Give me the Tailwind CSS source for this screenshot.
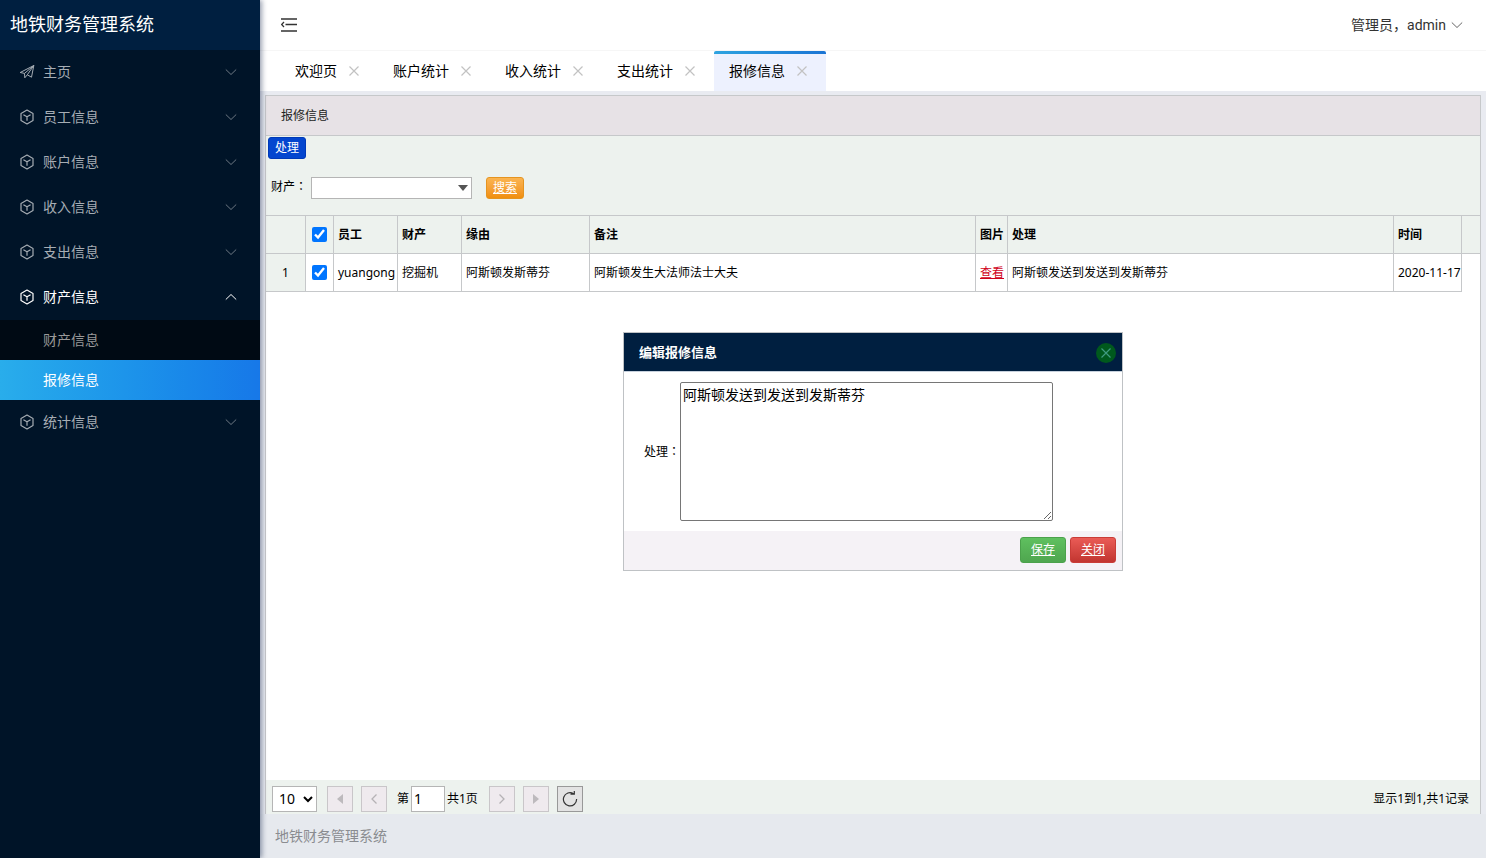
<!DOCTYPE html>
<html lang="zh-CN">
<head>
<meta charset="utf-8">
<title>地铁财务管理系统</title>
<script src="https://cdn.jsdelivr.net/npm/@tailwindcss/browser@4"></script>
</head>
<body class="flex h-screen overflow-hidden bg-[#e9ebf1] font-['Noto_Sans','Noto_Sans_CJK_SC',sans-serif] text-xs text-black">
<svg class="hidden">
  <symbol id="cube" viewBox="0 0 16 16" fill="none" stroke="currentColor" stroke-width="1.200" stroke-linejoin="round"><path d="M8 1 14 4.400v7.200L8 15 2 11.600V4.400zM4.400 5.800 8 7.800l3.600-2M8 7.800v4"/></symbol>
  <symbol id="down" viewBox="0 0 12 12" fill="none" stroke="currentColor"><path d="M.8 3.500 6 8.500l5.200-5"/></symbol>
  <symbol id="cross" viewBox="0 0 10 10" fill="none" stroke="currentColor" stroke-width="1.200"><path d="M.5.5l9 9M9.500.5l-9 9"/></symbol>
</svg>

<aside class="relative z-10 flex w-[260px] shrink-0 flex-col bg-[#001428] shadow-[2px_0_5px_rgba(0,21,60,0.4)]">
  <h1 class="flex h-[50px] items-center bg-[#001f40] px-[10px] pb-[2px] text-lg text-white">地铁财务管理系统</h1>
  <nav class="text-sm text-[#a6adb4]">
    <a href="#" class="flex h-[45px] items-center gap-2 pr-[23px] pb-[2px] pl-[19px]"><svg class="size-4" viewBox="0 0 16 16" fill="none" stroke="currentColor" stroke-linejoin="round"><path d="M1.200 8.500 14.800 1.500l-2.300 11.700-4.200-2.400-2.500 3-.3-4.400zM5.500 9.400l9.300-7.900-6.500 9.300"/></svg><span class="flex-1">主页</span><svg class="size-3 text-[#6d7883]"><use href="#down"/></svg></a>
    <a href="#" class="flex h-[45px] items-center gap-2 pr-[23px] pb-[2px] pl-[19px]"><svg class="size-4"><use href="#cube"/></svg><span class="flex-1">员工信息</span><svg class="size-3 text-[#6d7883]"><use href="#down"/></svg></a>
    <a href="#" class="flex h-[45px] items-center gap-2 pr-[23px] pb-[2px] pl-[19px]"><svg class="size-4"><use href="#cube"/></svg><span class="flex-1">账户信息</span><svg class="size-3 text-[#6d7883]"><use href="#down"/></svg></a>
    <a href="#" class="flex h-[45px] items-center gap-2 pr-[23px] pb-[2px] pl-[19px]"><svg class="size-4"><use href="#cube"/></svg><span class="flex-1">收入信息</span><svg class="size-3 text-[#6d7883]"><use href="#down"/></svg></a>
    <a href="#" class="flex h-[45px] items-center gap-2 pr-[23px] pb-[2px] pl-[19px]"><svg class="size-4"><use href="#cube"/></svg><span class="flex-1">支出信息</span><svg class="size-3 text-[#6d7883]"><use href="#down"/></svg></a>
    <a href="#" class="flex h-[45px] items-center gap-2 pr-[23px] pb-[2px] pl-[19px] text-white"><svg class="size-4"><use href="#cube"/></svg><span class="flex-1">财产信息</span><svg class="size-3 rotate-180"><use href="#down"/></svg></a>
    <a href="#" class="flex h-10 items-center bg-[#000a14] pl-[43px] text-[#999]">财产信息</a>
    <a href="#" class="flex h-10 items-center bg-linear-to-r from-[#29adeb] to-[#1778e8] pl-[43px] text-white">报修信息</a>
    <a href="#" class="flex h-[45px] items-center gap-2 pr-[23px] pb-[2px] pl-[19px]"><svg class="size-4"><use href="#cube"/></svg><span class="flex-1">统计信息</span><svg class="size-3 text-[#6d7883]"><use href="#down"/></svg></a>
  </nav>
</aside>

<main class="relative flex min-w-0 flex-1 flex-col">
  <header class="flex h-[51px] shrink-0 items-center justify-between border-b border-[#f6f6f6] bg-white pr-[23px] pl-[21px] text-sm text-[#333]">
    <button type="button" aria-label="收起菜单"><svg class="size-4" viewBox="0 0 16 16" fill="none" stroke="#333" stroke-width="1.300"><path d="M0 2h16M4.500 7.500H16M0 14h16M3 5 .6 7.500 3 10"/></svg></button>
    <button type="button" class="flex items-center gap-[5px] font-['Roboto','Noto_Sans_CJK_SC',sans-serif]"><span>管理员，admin</span><svg class="size-3 text-[#666]"><use href="#down"/></svg></button>
  </header>

  <div class="flex h-10 shrink-0 bg-white pl-5 text-sm">
    <div class="flex items-center gap-3 border-t-3 border-transparent pr-[19px] pb-[3px] pl-[15px]"><a href="#">欢迎页</a><button type="button" aria-label="关闭标签" class="text-[#c2c2c2]"><svg class="size-[10px]"><use href="#cross"/></svg></button></div>
    <div class="flex items-center gap-3 border-t-3 border-transparent pr-[19px] pb-[3px] pl-[15px]"><a href="#">账户统计</a><button type="button" aria-label="关闭标签" class="text-[#c2c2c2]"><svg class="size-[10px]"><use href="#cross"/></svg></button></div>
    <div class="flex items-center gap-3 border-t-3 border-transparent pr-[19px] pb-[3px] pl-[15px]"><a href="#">收入统计</a><button type="button" aria-label="关闭标签" class="text-[#c2c2c2]"><svg class="size-[10px]"><use href="#cross"/></svg></button></div>
    <div class="flex items-center gap-3 border-t-3 border-transparent pr-[19px] pb-[3px] pl-[15px]"><a href="#">支出统计</a><button type="button" aria-label="关闭标签" class="text-[#c2c2c2]"><svg class="size-[10px]"><use href="#cross"/></svg></button></div>
    <div class="flex flex-col rounded-t-xs bg-[#edf1fe]"><div class="h-[3px] rounded-t-xs bg-linear-to-r from-[#2ea3e0] to-[#1b74d4]"></div><div class="flex flex-1 items-center gap-3 pr-[19px] pb-[3px] pl-[15px]"><a href="#">报修信息</a><button type="button" aria-label="关闭标签" class="text-[#c2c2c2]"><svg class="size-[10px]"><use href="#cross"/></svg></button></div></div>
  </div>

  <section class="mx-[5px] mt-1 flex min-h-0 flex-1 flex-col border border-b-0 border-[#c6c8ca] bg-white">
    <h2 class="flex h-10 shrink-0 items-center border-b border-[#c6c8ca] bg-[#e7e2e6] px-[15px] text-[#222]">报修信息</h2>
    <div class="flex shrink-0 flex-col bg-[#edf2ee]">
      <div class="flex px-[2px] pt-px"><button type="button" class="h-[22px] w-[38px] rounded-[3px] border border-[#0039b8] bg-[#0446cf] text-white">处理</button></div>
      <form class="flex h-14 items-center px-[5px] pt-px">
        <label for="asset" class="w-10 pb-[2px] whitespace-nowrap">财产<span lang="zh-TW" class="font-['Noto_Sans_CJK_TC',sans-serif]">：</span></label>
        <div class="relative">
          <select id="asset" class="block h-[22px] w-[161px] appearance-none border border-[#b5b5b5] bg-white"><option></option></select>
          <svg class="pointer-events-none absolute top-2 right-1 h-[6px] w-[10px]" viewBox="0 0 10 6" fill="#555"><path d="M0 0h10L5 6z"/></svg>
        </div>
        <button type="button" class="ml-[14px] h-[22px] w-[38px] rounded-[3px] border border-[#e59420] bg-linear-to-b from-[#fbb450] to-[#f08f0a] text-white underline">搜索</button>
      </form>
    </div>
    <table class="w-full table-fixed border-separate border-spacing-0 border-t border-[#c6c8ca] text-left">
      <colgroup><col class="w-10"><col class="w-7"><col class="w-16"><col class="w-16"><col class="w-32"><col><col class="w-8"><col><col class="w-[68px]"><col class="w-[18px]"></colgroup>
      <thead>
        <tr class="h-[38px] bg-[#edf2ee] *:overflow-hidden *:border-r *:border-b *:border-[#c6c8ca] *:px-1 *:py-0 *:font-bold *:whitespace-nowrap">
          <td></td><td><input type="checkbox" checked aria-label="全选" class="mx-[2px] block size-[15px]"></td><th>员工</th><th>财产</th><th>缘由</th><th>备注</th><th>图片</th><th>处理</th><th>时间</th><td class="border-r-0!"></td>
        </tr>
      </thead>
      <tbody>
        <tr class="h-[38px] *:overflow-hidden *:border-r *:border-b *:border-[#c6c8ca] *:px-1 *:py-0 *:whitespace-nowrap">
          <td class="bg-[#edf2ee] text-center">1</td><td><input type="checkbox" checked aria-label="选择第1行" class="mx-[2px] block size-[15px]"></td><td>yuangong</td><td>挖掘机</td><td>阿斯顿发斯蒂芬</td><td>阿斯顿发生大法师法士大夫</td><td><a href="#" class="text-[#d0021b] underline">查看</a></td><td>阿斯顿发送到发送到发斯蒂芬</td><td>2020-11-17</td><td class="border-0!"></td>
        </tr>
      </tbody>
    </table>
    <div class="flex-1"></div>
    <div class="flex h-[34px] shrink-0 items-center bg-[#edf2ee] px-[6px] pt-[3px]">
      <div class="relative">
        <select aria-label="每页条数" class="block h-[26px] w-[45px] appearance-none border border-[#b5b5b5] bg-white pl-[6px] text-sm"><option>10</option></select>
        <svg class="pointer-events-none absolute top-[10px] right-1 h-[7px] w-[10px]" viewBox="0 0 10 7" fill="none" stroke="#000" stroke-width="2"><path d="M1 1l4 4 4-4"/></svg>
      </div>
      <button type="button" disabled aria-label="首页" class="ml-[10px] grid size-[26px] place-items-center border border-[#c9c6c9] bg-[#efeaee]"><svg class="h-[10px] w-[6px]" viewBox="0 0 6 10" fill="#bdbabd"><path d="M6 0v10L0 5z"/></svg></button>
      <button type="button" disabled aria-label="上一页" class="ml-2 grid size-[26px] place-items-center border border-[#c9c6c9] bg-[#efeaee]"><svg class="h-[10px] w-[6px]" viewBox="0 0 6 10" fill="none" stroke="#b5b2b5" stroke-width="1.300"><path d="M5.500.5 1 5l4.500 4.500"/></svg></button>
      <label for="page" class="ml-[10px] w-[14px]">第</label>
      <input id="page" type="text" value="1" class="h-[26px] w-[34px] border border-[#b5b5b5] bg-white px-[2px] text-sm">
      <span class="ml-[2px] w-8 whitespace-nowrap">共1页</span>
      <button type="button" disabled aria-label="下一页" class="ml-[10px] grid size-[26px] place-items-center border border-[#c9c6c9] bg-[#efeaee]"><svg class="h-[10px] w-[6px]" viewBox="0 0 6 10" fill="none" stroke="#b5b2b5" stroke-width="1.300"><path d="M.5.5 5 5 .5 9.500"/></svg></button>
      <button type="button" disabled aria-label="末页" class="ml-2 grid size-[26px] place-items-center border border-[#c9c6c9] bg-[#efeaee]"><svg class="h-[10px] w-[6px]" viewBox="0 0 6 10" fill="#bdbabd"><path d="M0 0v10l6-5z"/></svg></button>
      <button type="button" aria-label="刷新" class="ml-2 grid size-[26px] place-items-center border border-[#999] bg-[#e3e3e3]"><svg class="size-4" viewBox="0 0 16 16" fill="none" stroke="#333" stroke-width="1.200"><path d="M11.500 2.700A6.600 6.600 0 1 0 14.600 8M8.500 3.200h3.800V-.5"/></svg></button>
      <p class="ml-auto pr-[5px]">显示1到1,共1记录</p>
    </div>
  </section>

  <footer class="flex h-11 shrink-0 items-center bg-[#e6e9ee] px-[15px] text-sm text-[#8a8c90]">地铁财务管理系统</footer>

  <div role="dialog" aria-labelledby="dialog-title" class="absolute top-[332px] left-1/2 w-[500px] -translate-x-1/2 border border-[#bfc2c5] bg-white">
    <div class="flex h-[39px] items-center justify-between border-b border-[#c6d0dc] bg-[#001f40] pt-px pr-[6px] pl-[15px] text-white">
      <h3 id="dialog-title" class="text-[13px] font-bold">编辑报修信息</h3>
      <button type="button" aria-label="关闭" class="grid size-5 place-items-center rounded-full bg-[#00591d] text-[#3f9a80]"><svg class="size-[10px]"><use href="#cross"/></svg></button>
    </div>
    <div class="flex items-center py-[10px] pl-5">
      <label for="handle" class="w-9 whitespace-nowrap">处理<span lang="zh-TW" class="font-['Noto_Sans_CJK_TC',sans-serif]">：</span></label>
      <textarea id="handle" class="block h-[139px] w-[373px] resize rounded-xs border border-[#767676] bg-white px-[2px] py-[2px] text-sm">阿斯顿发送到发送到发斯蒂芬</textarea>
    </div>
    <div class="flex h-[39px] items-center justify-end gap-1 bg-[#f5f2f6] px-[6px] pb-[2px]">
      <button type="button" class="h-[26px] w-[46px] rounded-[3px] border border-[#4ba14b] bg-linear-to-b from-[#5fc05f] to-[#4fa64f] text-white underline">保存</button>
      <button type="button" class="h-[26px] w-[46px] rounded-[3px] border border-[#c93c37] bg-linear-to-b from-[#ea5b56] to-[#c23530] text-white underline">关闭</button>
    </div>
  </div>
</main>
</body>
</html>
